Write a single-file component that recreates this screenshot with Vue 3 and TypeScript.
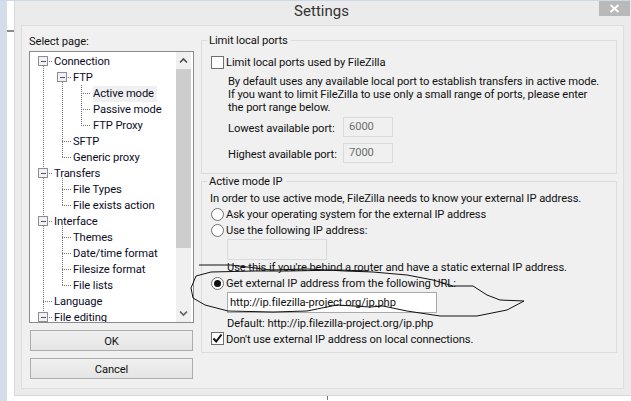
<script setup lang="ts">
interface TreeRow { label: string; level: number; active?: boolean }
const rows: TreeRow[] = [
  { label: 'Connection', level: 0 },
  { label: 'FTP', level: 1 },
  { label: 'Active mode', level: 2, active: true },
  { label: 'Passive mode', level: 2 },
  { label: 'FTP Proxy', level: 2 },
  { label: 'SFTP', level: 1 },
  { label: 'Generic proxy', level: 1 },
  { label: 'Transfers', level: 0 },
  { label: 'File Types', level: 1 },
  { label: 'File exists action', level: 1 },
  { label: 'Interface', level: 0 },
  { label: 'Themes', level: 1 },
  { label: 'Date/time format', level: 1 },
  { label: 'Filesize format', level: 1 },
  { label: 'File lists', level: 1 },
  { label: 'Language', level: 0 },
  { label: 'File editing', level: 0 },
]
const expanders: [number, number][] = [[43, 61], [62, 77], [43, 173], [43, 221], [43, 317]]
const dots = 'M43 66V312 M62 82V157 M81 85V125 M62 178V205 M62 226V285 ' +
  'M49 61H53 M68 77H72 M81 93H91 M81 109H91 M81 125H91 M62 141H72 M62 157H72 ' +
  'M49 173H53 M62 189H72 M62 205H72 M49 221H53 M62 237H72 M62 253H72 M62 269H72 M62 285H72 M43 301H53 M49 317H53'
const scribble = 'M199 265 L231 265 L271 270 L308 269 L345 271 L373 272 L407 275 L433 280 L453 286 L473 286 L487 295 L500 300 L524 301 ' +
  'L507 310 L477 316 L440 316 L407 311 L383 306 L370 307 L337 305 L307 311 L273 312 L228 311 L205 305 L193 298 L191 288 L196 276 L211 272 L255 271 L288 271 L340 270 L368 271'
</script>

<template>
  <div class="page">
    <div class="strip"></div>
    <div class="margin"><div class="margin-line"></div></div>
    <div class="dialog">
      <div class="titlebar">
        <span class="title">Settings</span>
        <div class="close">
          <svg width="11" height="9" viewBox="0 0 11 9"><path d="M1.5 1 L9.5 8 M9.5 1 L1.5 8" stroke="#fff" stroke-width="2" /></svg>
        </div>
      </div>
      <div class="panel">
        <div class="left">
          <div class="select-label">Select page:</div>
          <div class="tree">
            <svg class="tree-lines" width="146" height="270" viewBox="30 52 146 270">
              <path :d="dots" fill="none" stroke="#777" stroke-dasharray="1 1" shape-rendering="crispEdges" />
              <g v-for="e in expanders" :key="e[1]">
                <rect :x="e[0] - 4.5" :y="e[1] - 4.5" width="9" height="9" fill="#f1f1f4" stroke="#8e8e8e" shape-rendering="crispEdges" />
                <path :d="`M${e[0] - 2.5} ${e[1] + 0.5}H${e[0] + 2.5}`" stroke="#45557f" shape-rendering="crispEdges" />
              </g>
            </svg>
            <div class="tree-list">
              <div v-for="r in rows" :key="r.label" class="tree-row" :class="'level-' + r.level">
                <span class="tree-text" :class="{ active: r.active }">{{ r.label }}</span>
              </div>
            </div>
            <div class="scrollbar">
              <div class="arrow">
                <svg width="9" height="7" viewBox="0 0 9 7"><path d="M1 5.5 L4.5 2 L8 5.5" fill="none" stroke="#505050" stroke-width="1.7" /></svg>
              </div>
              <div class="thumb"></div>
              <div class="track"></div>
              <div class="arrow">
                <svg width="9" height="7" viewBox="0 0 9 7"><path d="M1 1.5 L4.5 5 L8 1.5" fill="none" stroke="#606060" stroke-width="1.7" /></svg>
              </div>
            </div>
          </div>
          <button class="btn ok">OK</button>
          <button class="btn cancel">Cancel</button>
        </div>
        <div class="right">
          <fieldset class="group group-ports">
            <legend>Limit local ports</legend>
            <div class="line check-row">
              <span class="check"></span><span>Limit local ports used by FileZilla</span>
            </div>
            <div class="desc">
              By default uses any available local port to establish transfers in active mode.<br />
              If you want to limit FileZilla to use only a small range of ports, please enter<br />
              the port range below.
            </div>
            <div class="port-row first">
              <span class="port-label">Lowest available port:</span><span class="port-input">6000</span>
            </div>
            <div class="port-row">
              <span class="port-label">Highest available port:</span><span class="port-input">7000</span>
            </div>
          </fieldset>
          <fieldset class="group group-ip">
            <legend>Active mode IP</legend>
            <div class="line intro">In order to use active mode, FileZilla needs to know your external IP address.</div>
            <div class="line radio-row"><span class="radio"></span><span>Ask your operating system for the external IP address</span></div>
            <div class="line radio-row"><span class="radio"></span><span>Use the following IP address:</span></div>
            <div class="ip-input"></div>
            <div class="line indent hint">Use this if you're behind a router and have a static external IP address.</div>
            <div class="line radio-row"><span class="radio on"></span><span>Get external IP address from the following URL:</span></div>
            <div class="url-input">http://ip.filezilla-project.org/ip.php</div>
            <div class="line indent default">Default: http://ip.filezilla-project.org/ip.php</div>
            <div class="line check-row">
              <span class="check on">
                <svg width="11" height="11" viewBox="0 0 11 11"><path d="M1.5 5.5 L4.2 8.5 L9.5 1.5" fill="none" stroke="#111" stroke-width="2" /></svg>
              </span><span>Don't use external IP address on local connections.</span>
            </div>
          </fieldset>
        </div>
      </div>
    </div>
    <svg class="scribble" width="631" height="401" viewBox="0 0 631 401">
      <path :d="scribble" fill="none" stroke="#111" stroke-width="1" stroke-linejoin="round" />
    </svg>
    <div class="tick"></div>
  </div>
</template>

<style scoped>
.page {
  position: relative;
  width: 631px;
  height: 401px;
  overflow: hidden;
  background: #fff;
  display: flex;
  align-items: flex-start;
  font-family: Roboto, "Open Sans", sans-serif;
  font-size: 11.2px;
  letter-spacing: -0.1px;
  color: #111;
  border-top: 1px solid #cdd8e8;
  box-sizing: border-box;
}
.strip { width: 7px; height: 400px; background: #d3ddec; flex: none; }
.margin { width: 7px; height: 400px; flex: none; padding-top: 29px; box-sizing: border-box; }
.margin-line { height: 2px; background: #8c8c8c; }
.dialog {
  flex: none;
  width: 617px;
  height: 395px;
  background: #ebebeb;
  box-sizing: border-box;
  border-left: 1px solid #dadada;
  border-bottom: 1px solid #d8d8d8;
  padding: 0 7px 6px 6px;
  display: flex;
  flex-direction: column;
}
.titlebar { position: relative; height: 24px; flex: none; display: flex; justify-content: center; }
.title { font-size: 15px; line-height: 20px; color: #333; letter-spacing: 0; margin-right: 2px; }
.close {
  position: absolute;
  right: -6px;
  top: -1px;
  width: 31px;
  height: 16px;
  background: #b9b9b9;
  display: flex;
  align-items: center;
  justify-content: center;
}
.panel {
  flex: 1;
  display: flex;
  background: #f0f0f0;
  border: 1px solid #dedede;
  padding: 0 6px 0 7px;
  gap: 7px;
}
.left { width: 165px; flex: none; display: flex; flex-direction: column; }
.select-label { height: 25px; line-height: 32px; flex: none; }
.tree {
  position: relative;
  height: 272px;
  box-sizing: border-box;
  border: 1px solid #8c8c8c;
  background: #fff;
  display: flex;
  overflow: hidden;
  flex: none;
}
.tree-lines { position: absolute; left: 0; top: 0; }
.tree-list { flex: 1; padding-top: 2px; box-sizing: border-box; min-width: 0; height: 270px; overflow: hidden; }
.tree-row { height: 16px; line-height: 16px; white-space: nowrap; color: #0c0c28; }
.level-0 { padding-left: 24px; }
.level-1 { padding-left: 43px; }
.level-2 { padding-left: 63px; }
.tree-text.active { background: #f0f0f0; display: inline-block; padding-right: 3px; }
.scrollbar { width: 15px; margin-right: 2px; flex: none; display: flex; flex-direction: column; background: #f0f0f0; }
.arrow { height: 17px; flex: none; display: flex; align-items: center; justify-content: center; }
.thumb { height: 179px; background: #cdcdcd; flex: none; }
.track { flex: 1; }
.btn {
  font: inherit;
  letter-spacing: inherit;
  color: #111;
  height: 21px;
  margin: 7px 0 0 1px;
  width: 163px;
  padding: 2px 0 0;
  border: 1px solid #acacac;
  background: linear-gradient(#f0f0f0, #e5e5e5);
  flex: none;
}
.right { flex: 1; display: flex; flex-direction: column; gap: 0; padding-top: 7px; min-width: 0; }
.group {
  margin: 0;
  padding: 0 0 0 9px;
  border: 1px solid #dcdcdc;
  box-sizing: border-box;
  min-width: 0;
}
.group legend { padding: 0 3px 0 2px; margin-left: -4px; line-height: 16px; height: 14px; }
.group-ports { height: 141px; }
.group-ip { height: 179px; }
.line { height: 16px; line-height: 18px; display: flex; align-items: flex-start; white-space: nowrap; }
.group-ports .check-row { margin-top: 7px; }
.check {
  width: 13px;
  height: 13px;
  box-sizing: border-box;
  border: 1px solid #707070;
  background: #fff;
  margin: 2px 2px 0 0;
  flex: none;
  display: flex;
  align-items: center;
  justify-content: center;
}
.check.on { margin-top: 1px; }
.radio {
  width: 13px;
  height: 13px;
  box-sizing: border-box;
  border: 1px solid #707070;
  border-radius: 50%;
  background: #fff;
  margin: 2px 2px 0 0;
  flex: none;
  position: relative;
}
.radio.on::after {
  content: "";
  position: absolute;
  left: 2px;
  top: 2px;
  width: 7px;
  height: 7px;
  border-radius: 50%;
  background: #111;
}
.desc { margin: 5px 0 0 17px; line-height: 13px; white-space: nowrap; }
.port-row { display: flex; align-items: center; height: 20px; margin-left: 17px; margin-top: 6px; }
.port-row.first { margin-top: 3px; }
.port-label { width: 115px; flex: none; white-space: nowrap; padding-top: 2px; }
.port-input, .ip-input {
  width: 50px;
  height: 20px;
  box-sizing: border-box;
  border: 1px solid #dadada;
  background: #f0f0f0;
  color: #6d6d6d;
  line-height: 18px;
  padding-left: 5px;
}
.intro { margin-top: 2px; margin-left: -1px; }
.ip-input { width: 100px; height: 21px; margin: 1px 0 0 16px; padding: 0; }
.indent { margin-left: 16px; }
.hint { margin-top: -1px; }
.url-input {
  width: 210px;
  height: 21px;
  box-sizing: border-box;
  border: 1px solid #aaa;
  background: #fff;
  line-height: 20px;
  padding-left: 2px;
  margin: 1px 0 0 16px;
  white-space: nowrap;
}
.default { margin-top: 2px; }
.scribble { position: absolute; left: 0; top: -1px; pointer-events: none; }
.tick { position: absolute; left: 327px; top: 395px; width: 1px; height: 4px; background: #777; }
</style>
